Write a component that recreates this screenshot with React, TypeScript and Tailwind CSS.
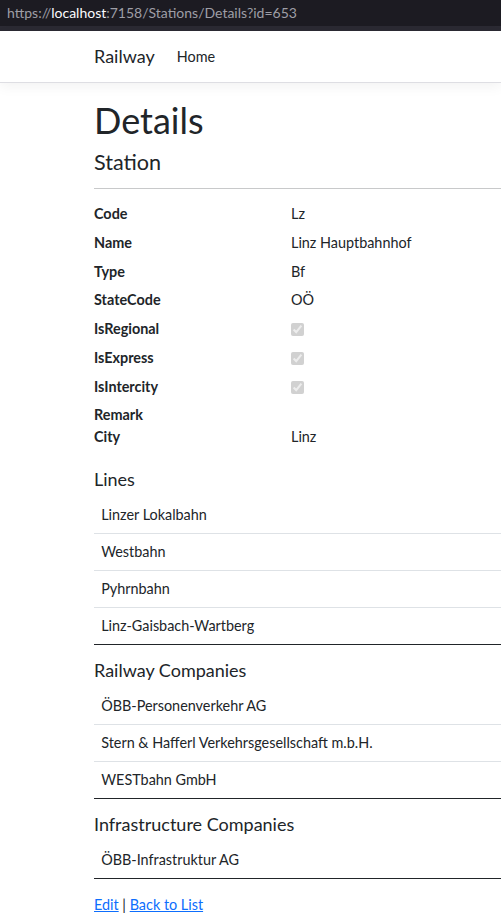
import React from 'react';

const font = { fontFamily: 'Lato, "Open Sans", sans-serif' };

const fields: { label: string; value?: string; check?: boolean }[] = [
  { label: 'Code', value: 'Lz' },
  { label: 'Name', value: 'Linz Hauptbahnhof' },
  { label: 'Type', value: 'Bf' },
  { label: 'StateCode', value: 'OÖ' },
  { label: 'IsRegional', check: true },
  { label: 'IsExpress', check: true },
  { label: 'IsIntercity', check: true },
  { label: 'Remark' },
  { label: 'City', value: 'Linz' },
];

const Section: React.FC<{ title: string; items: string[] }> = ({ title, items }) => (
  <div>
    <h5 className="text-[18px] leading-[21.6px] font-normal mb-[6.5px]">{title}</h5>
    <table className="w-full mb-[15px] border-collapse">
      <tbody>
        {items.map((it, i) => (
          <tr key={it}>
            <td
              className={
                'px-[7.2px] py-[7.2px] leading-[21.6px] border-b ' +
                (i === items.length - 1 ? 'border-[#212529]' : 'border-[#dee2e6]')
              }
            >
              {it}
            </td>
          </tr>
        ))}
      </tbody>
    </table>
  </div>
);

export default function App() {
  return (
    <div className="min-h-screen bg-white text-[#212529] text-[14.4px] leading-[21.6px]" style={font}>
      {/* address bar */}
      <div className="bg-[#1c1b22] h-[26px] flex items-center pl-[7px] text-[14px] text-[#9e9ea6]">
        https://<span className="text-[#fbfbfe]">localhost</span>:7158/Stations/Details?id=653
      </div>
      <div className="bg-[#2b2a33] h-[5px]" />

      <nav className="h-[52px] bg-white border-b border-[#dedee3] shadow-[0_4px_12px_rgba(0,0,0,0.05)] flex items-center pl-[94px]">
        <span className="text-[18px] mr-[22px]">Railway</span>
        <span className="text-[14.4px]">Home</span>
      </nav>

      <main className="pl-[94px]">
        <h1 className="text-[36px] leading-[43px] font-normal mt-[16px] mb-[7px]">Details</h1>
        <h4 className="text-[21.6px] leading-[26px] font-normal">Station</h4>
        <hr className="mt-[13px] mb-[14px] border-0 border-t border-[#c8c9ca]" />

        <dl className="mb-[14px]">
          {fields.map(f => (
            <div key={f.label} className="flex items-start">
              <dt className="w-[197px] font-bold">{f.label}</dt>
              <dd className="mb-[7.2px]">
                {f.value}
                {f.check && (
                  <input type="checkbox" checked disabled readOnly className="w-[13px] h-[13px] align-[-2px]" />
                )}
              </dd>
            </div>
          ))}
        </dl>

        <Section title="Lines" items={['Linzer Lokalbahn', 'Westbahn', 'Pyhrnbahn', 'Linz-Gaisbach-Wartberg']} />
        <Section
          title="Railway Companies"
          items={['ÖBB-Personenverkehr AG', 'Stern & Hafferl Verkehrsgesellschaft m.b.H.', 'WESTbahn GmbH']}
        />
        <Section title="Infrastructure Companies" items={['ÖBB-Infrastruktur AG']} />

        <div>
          <a href="#" className="text-[#0d6efd] underline">Edit</a> |{' '}
          <a href="#" className="text-[#0d6efd] underline">Back to List</a>
        </div>
      </main>
    </div>
  );
}
